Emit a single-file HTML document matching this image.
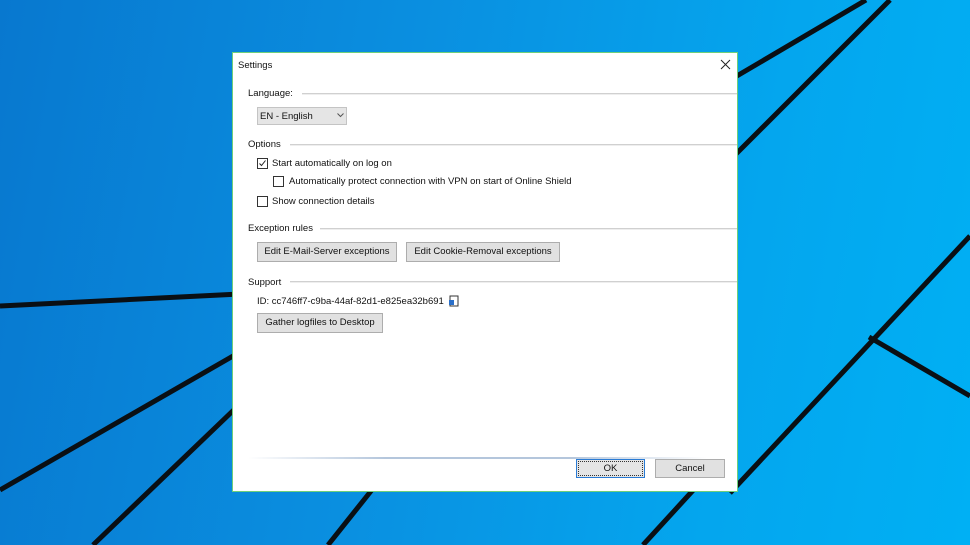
<!DOCTYPE html>
<html><head><style>
body{margin:0;width:970px;height:545px;overflow:hidden;position:relative;background:linear-gradient(100deg,#0878cf 0%,#0a8fe0 40%,#04a6ee 75%,#00b0f4 100%);font-family:"Liberation Sans",sans-serif;font-size:9.5px;color:#111}
svg.bg{position:absolute;left:0;top:0}
.dlg{position:absolute;left:232px;top:52px;width:504px;height:438px;background:#fff;border:1px solid #6fcf7a}
.t{position:absolute;white-space:nowrap}
.hr{position:absolute;height:1px;background:#d0d0d0;border-bottom:1px solid #eee}
.btn{position:absolute;background:#e1e1e1;border:1px solid #adadad;box-sizing:border-box;text-align:center;font-size:9.5px;line-height:17px}
.cb{position:absolute;width:9px;height:9px;border:1px solid #333;background:#fff}
</style></head><body>
<svg class="bg" width="970" height="545">
<g stroke="#0a0f14" stroke-width="5" fill="none">
<line x1="0" y1="306" x2="240" y2="294"/>
<line x1="0" y1="490" x2="240" y2="352"/>
<line x1="93" y1="545" x2="240" y2="404"/>
<line x1="328" y1="545" x2="375" y2="486"/>
<line x1="643" y1="545" x2="697" y2="486"/>
<line x1="730" y1="80" x2="866" y2="0"/>
<line x1="730" y1="160" x2="890" y2="0"/>
<line x1="730" y1="493" x2="970" y2="236"/>
<line x1="869" y1="337" x2="970" y2="396"/>
</g></svg>
<div class="dlg">
<div class="t" style="left:5px;top:7px">Settings</div>
<svg style="position:absolute;left:487px;top:6px" width="11" height="11"><path d="M1 1L10 10M10 1L1 10" stroke="#222" stroke-width="1"/></svg>
<div class="t" style="left:15px;top:35px">Language:</div>
<div class="hr" style="left:69px;right:0;top:40px"></div>
<div style="position:absolute;left:24px;top:54px;width:90px;height:18px;background:#e5e5e5;border:1px solid #c4c4c4;box-sizing:border-box"></div>
<div class="t" style="left:27px;top:58px">EN - English</div>
<svg style="position:absolute;left:104px;top:60px" width="7" height="5"><path d="M0.5 0.5L3.5 3.5L6.5 0.5" stroke="#555" fill="none"/></svg>
<div class="t" style="left:15px;top:86px">Options</div>
<div class="hr" style="left:57px;right:0;top:91px"></div>
<div class="cb" style="left:24px;top:105px"></div>
<svg style="position:absolute;left:25px;top:106px" width="9" height="9"><path d="M1.5 4.5L3.5 6.5L7.5 1.5" stroke="#222" fill="none"/></svg>
<div class="t" style="left:39px;top:105px">Start automatically on log on</div>
<div class="cb" style="left:40px;top:123px"></div>
<div class="t" style="left:56px;top:123px">Automatically protect connection with VPN on start of Online Shield</div>
<div class="cb" style="left:24px;top:143px"></div>
<div class="t" style="left:39px;top:143px">Show connection details</div>
<div class="t" style="left:15px;top:170px">Exception rules</div>
<div class="hr" style="left:87px;right:0;top:175px"></div>
<div class="btn" style="left:24px;top:189px;width:140px;height:20px">Edit E-Mail-Server exceptions</div>
<div class="btn" style="left:173px;top:189px;width:154px;height:20px">Edit Cookie-Removal exceptions</div>
<div class="t" style="left:15px;top:224px">Support</div>
<div class="hr" style="left:57px;right:0;top:228px"></div>
<div class="t" style="left:24px;top:243px">ID: cc746ff7-c9ba-44af-82d1-e825ea32b691</div>
<svg style="position:absolute;left:215px;top:242px" width="11" height="12"><rect x="2" y="1" width="8" height="10" fill="#fff" stroke="#333"/><rect x="1" y="5" width="5" height="5" fill="#2a6fc9"/></svg>
<div class="btn" style="left:24px;top:260px;width:126px;height:20px">Gather logfiles to Desktop</div>
<div style="position:absolute;left:15px;right:30px;top:404px;height:2px;background:linear-gradient(90deg,rgba(170,190,215,0),#b4c6dc 30%,#b4c6dc 70%,rgba(170,190,215,0))"></div>
<div class="btn" style="left:343px;top:406px;width:69px;height:19px;border:1px solid #2a7bd4;background:#e5e5e5;outline:1px dotted #333;outline-offset:-3px">OK</div>
<div class="btn" style="left:422px;top:406px;width:70px;height:19px">Cancel</div>
</div>
</body></html>
